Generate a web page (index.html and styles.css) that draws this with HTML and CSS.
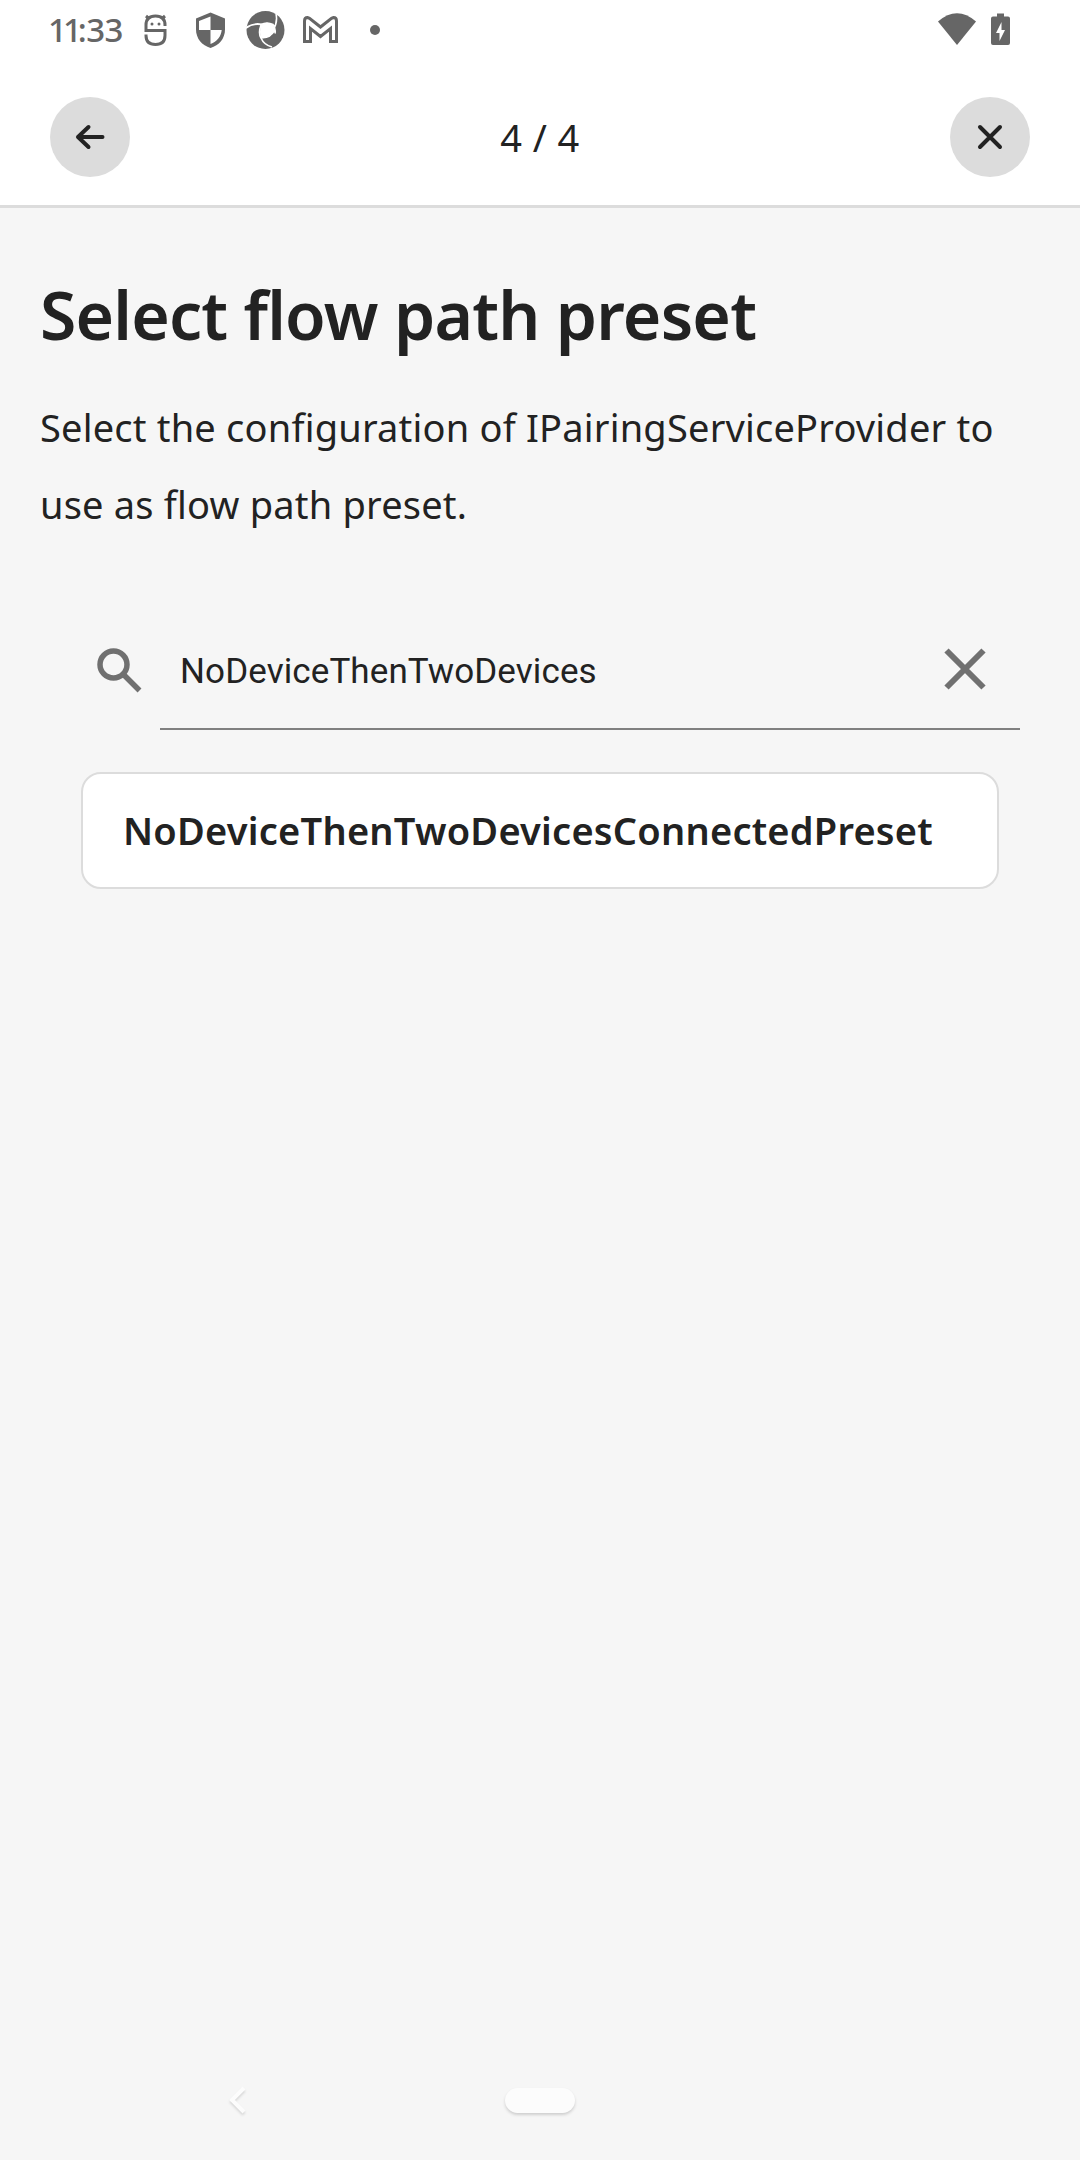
FILE: index.html
```html
<!DOCTYPE html>
<html lang="en">
<head>
<meta charset="utf-8">
<title>Select flow path preset</title>
<link rel="stylesheet" href="styles.css">
</head>
<body>
<div class="screen">
  <header class="top">
    <div class="status">
      <span class="clock"><span class="hours">11</span>:33</span>
      <svg class="status-left" width="250" height="60" viewBox="140 0 250 60" fill="#666">
        <g fill="none" stroke="#666" stroke-width="3">
          <path d="M165 26v-1q0-9-9.500-9t-9.500 9v5.500h19v5q0 9-9.500 9t-9.500-9v-1"/>
          <path d="M149.500 19l-3.500-3M161.500 19l3.500-3" stroke-width="3"/>
        </g>
        <circle cx="152" cy="24" r="1.500"/><circle cx="159" cy="24" r="1.500"/>
        <path d="M210.500 12.500l14.500 6v11c0 9-6 16-14.500 18.500c-8.500-2.500-14.500-9.500-14.500-18.500v-11z"/>
        <path d="M210.500 16.500v13.500h-11.500v-9zM210.500 30h11.200c-.6 6.500-4.700 11.500-11.200 14z" fill="#fff"/>
        <circle cx="265.500" cy="30" r="19"/>
        <path d="M261 24.500q6-3.500 12 0l2 5-5 7-9 1.500q-2-6 0-13.500z" fill="#fff"/>
        <path d="M246 28q7-5 15-3.500 6-3 12 0 3 4 2 9M276 14q2 8-3 16.500M275 30q-6 9-14 7.500M261 25q-3 8 0 13 3 7 11 9M247 27q8-4.500 15-2.500" fill="none" stroke="#fff" stroke-width="1.600"/>
        <path d="M304.500 41.500V21q0-3.500 3-3.500l2 .8 11 8.700 11-8.700 2-.8q3 0 3 3.500v20.500h-6V28.500l-10 8-10-8v13z" fill="none" stroke="#666" stroke-width="3"/>
        <circle cx="375" cy="30" r="5"/>
      </svg>
      <svg class="status-right" width="80" height="60" viewBox="936 0 80 60" fill="#666">
        <path d="M938 21.500q19-16.500 38 0l-19 23.500z"/>
        <path d="M997 13.500h7v3h4q2 0 2 2v24.500q0 2-2 2h-15q-2 0-2-2v-24.500q0-2 2-2h4z"/>
        <path d="M1001.500 22l-5.500 11h3.500v8l5.500-11h-3.500z" fill="#fff"/>
      </svg>
    </div>
    <div class="bar">
      <button class="round" aria-label="Back"><svg width="80" height="80" viewBox="0 0 80 80"><path d="M52.500 40H28M38.500 30L28 40l10.500 10"/></svg></button>
      <span class="step">4 / 4</span>
      <button class="round" aria-label="Close"><svg width="80" height="80" viewBox="0 0 80 80"><path d="M30 30l20 20M50 30L30 50"/></svg></button>
    </div>
  </header>
  <main class="content">
    <h1 class="title">Select flow path preset</h1>
    <p class="text">Select the configuration of IPairingServiceProvider to<br>use as flow path preset.</p>
    <div class="search">
      <svg class="glass" width="46" height="46" viewBox="0 0 46 46"><circle cx="16.500" cy="16.500" r="13.500"/><path d="M26.500 26.500l16 16"/></svg>
      <div class="field">
        <span class="query">NoDeviceThenTwoDevices</span>
        <svg class="clear" width="42" height="42" viewBox="0 0 42 42"><path d="M2.500 2.500l37 37M39.500 2.500l-37 37"/></svg>
      </div>
    </div>
    <div class="card"><span class="card-text">NoDeviceThenTwoDevicesConnectedPreset</span></div>
  </main>
  <footer class="nav">
    <svg class="nav-back" width="24" height="34" viewBox="0 0 24 34"><path d="M17 5L5 17l12 12"/></svg>
    <span class="pill"></span>
  </footer>
</div>
</body>
</html>
```
FILE: styles.css
```css
* { box-sizing: border-box; }
body { margin: 0; }
.screen {
  width: 1080px;
  height: 2160px;
  display: flex;
  flex-direction: column;
  background: #f6f6f6;
  color: #222;
  font-family: "Noto Sans", "Open Sans", sans-serif;
}
.top { height: 208px; background: #fff; border-bottom: 3px solid #dcdcdc; }
.status { height: 60px; display: flex; }
.clock { width: 92px; margin-left: 48px; font-size: 33px; line-height: 59px; font-weight: 500; color: #666; white-space: nowrap; letter-spacing: -0.600px; }
.hours { letter-spacing: -4px; }
.status-left { display: block; }
.status-right { display: block; margin-left: auto; margin-right: 64px; }
.bar { display: flex; justify-content: space-between; align-items: center; height: 80px; margin: 37px 50px 0; }
.round { width: 80px; height: 80px; padding: 0; border: 0; border-radius: 50%; background: #dcdcdc; }
.round svg { display: block; fill: none; stroke: #222; stroke-width: 4; stroke-linecap: round; stroke-linejoin: round; }
.step { font-size: 38px; line-height: 80px; letter-spacing: 0.400px; }
.content { flex: 1; }
.title { margin: 66px 0 0 40px; font-size: 66px; line-height: 80px; font-weight: 600; white-space: nowrap; letter-spacing: -0.820px; }
.text { margin: 35px 0 0 40px; font-size: 38px; line-height: 77px; white-space: nowrap; letter-spacing: 0.200px; }
.search { display: flex; height: 122px; margin: 65px 60px 0 97px; }
.glass { display: block; margin: 40px 17px 0 0; fill: none; stroke: #707070; stroke-width: 5.500; }
.field { flex: 1; display: flex; justify-content: space-between; align-items: center; padding: 2px 34px 0 20px; border-bottom: 2px solid #808080; }
.query { padding-top: 6px; font-family: Roboto, sans-serif; font-size: 35px; line-height: 42px; letter-spacing: 0.100px; }
.clear { display: block; fill: none; stroke: #707070; stroke-width: 6; }
.card { display: flex; align-items: center; width: 918px; height: 117px; margin: 42px 0 0 81px; padding: 0 0 1px 40px; border: 2.500px solid #dcdcdc; border-radius: 20px; background: #fff; }
.card-text { font-size: 38px; line-height: 60px; font-weight: 600; letter-spacing: 0.230px; }
.nav { display: flex; align-items: center; height: 120px; padding: 0 0 0 227px; }
.nav-back { display: block; fill: none; stroke: #fcfcfc; stroke-width: 4; filter: drop-shadow(0 2px 1px #d5d5d5); }
.pill { width: 70px; height: 25px; margin-left: 254px; border-radius: 13px; background: #fcfcfc; box-shadow: 0 2px 3px #cfcfcf; }
```
